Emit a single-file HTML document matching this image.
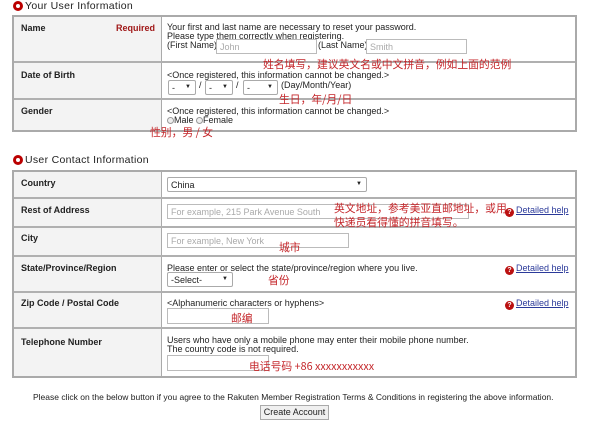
<!DOCTYPE html>
<html><head><meta charset="utf-8"><style>
*{margin:0;padding:0;box-sizing:border-box}
body{width:600px;height:424px;background:#fff;font-family:"Liberation Sans","Noto Sans CJK SC",sans-serif;font-size:9px;color:#222;position:relative;overflow:hidden}
.a{position:absolute;white-space:nowrap}
.h{font-size:10.5px;color:#222;letter-spacing:.3px}
.dot{position:absolute;width:10px;height:10px;border-radius:50%;background:#b00;}
.dot:after{content:"";position:absolute;left:3px;top:3px;width:4px;height:4px;border-radius:50%;background:#fff}
.tbl{position:absolute;left:12px;width:565px;border:2px solid #aaa;background:#fff}
.lab{position:absolute;left:0;width:148px;background:#f3f3f3;border-right:1px solid #aaa}
.ln{position:absolute;left:0;right:0;height:2px;background:#b0b0b0}
.b{font-weight:bold;font-size:9px;color:#222}
.in{position:absolute;border:1px solid #bbb;background:#fff;color:#aaa;font-size:9px;padding:2px 3px;height:15px}
.sel{position:absolute;border:1px solid #aaa;background:#fff;font-size:9px;padding:2px 3px;height:15px;border-radius:2px}
.sel:after{content:"▼";position:absolute;right:4px;top:3px;font-size:6px}
.r{color:#c4262a;font-size:10.8px;font-family:"Noto Sans CJK SC",sans-serif}
.help{color:#2b3a9a;text-decoration:underline;font-size:9px}
.q{display:inline-block;width:9px;height:9px;border-radius:50%;background:#b11;color:#fff;font-size:7px;text-align:center;line-height:9px;font-weight:bold;vertical-align:-1px;margin-right:2px}
.rad{display:inline-block;width:7px;height:7px;border-radius:50%;border:1px solid #999;background:#eee;vertical-align:-1px}
</style></head><body>

<div class="dot" style="left:13px;top:1px"></div>
<div class="a h" style="left:25px;top:0px">Your User Information</div>

<div class="tbl" style="top:15px;height:117px">
  <div class="lab" style="top:0;height:113px"></div>
  <div class="ln" style="top:44px"></div>
  <div class="ln" style="top:81px"></div>
</div>
<div class="a b" style="left:21px;top:23px">Name</div>
<div class="a b" style="left:116px;top:23px;color:#a01818">Required</div>
<div class="a" style="left:167px;top:23px;line-height:9px">Your first and last name are necessary to reset your password.<br>Please type them correctly when registering.<br>(First Name)</div>
<div class="in" style="left:216px;top:39px;width:101px">John</div>
<div class="a" style="left:318px;top:40px">(Last Name)</div>
<div class="in" style="left:366px;top:39px;width:101px">Smith</div>
<div class="a r" style="left:263px;top:56px">姓名填写，建议英文名或中文拼音，例如上面的范例</div>

<div class="a b" style="left:21px;top:70px">Date of Birth</div>
<div class="a" style="left:167px;top:70px">&lt;Once registered, this information cannot be changed.&gt;</div>
<div class="sel" style="left:168px;top:80px;width:28px">-</div>
<div class="a" style="left:199px;top:80px">/</div>
<div class="sel" style="left:205px;top:80px;width:28px">-</div>
<div class="a" style="left:236px;top:80px">/</div>
<div class="sel" style="left:243px;top:80px;width:35px">-</div>
<div class="a" style="left:281px;top:80px">(Day/Month/Year)</div>
<div class="a r" style="left:279px;top:91px">生日，年/月/日</div>

<div class="a b" style="left:21px;top:106px">Gender</div>
<div class="a" style="left:167px;top:106px">&lt;Once registered, this information cannot be changed.&gt;</div>
<div class="a" style="left:167px;top:115px"><span class="rad"></span>Male <span class="rad"></span>Female</div>
<div class="a r" style="left:150px;top:124px">性别，男 / 女</div>

<div class="dot" style="left:13px;top:155px"></div>
<div class="a h" style="left:25px;top:154px">User Contact Information</div>

<div class="tbl" style="top:170px;height:208px">
  <div class="lab" style="top:0;height:204px"></div>
  <div class="ln" style="top:25px"></div>
  <div class="ln" style="top:54px"></div>
  <div class="ln" style="top:83px"></div>
  <div class="ln" style="top:119px"></div>
  <div class="ln" style="top:155px"></div>
</div>
<div class="a b" style="left:21px;top:178px">Country</div>
<div class="sel" style="left:167px;top:177px;width:200px;color:#222">China</div>

<div class="a b" style="left:21px;top:205px">Rest of Address</div>
<div class="in" style="left:167px;top:204px;width:302px">For example, 215 Park Avenue South</div>
<div class="a r" style="left:334px;top:201px;line-height:14px">英文地址，参考美亚直邮地址，或用<br>快递员看得懂的拼音填写。</div>
<div class="a" style="left:505px;top:205px"><span class="q">?</span><span class="help">Detailed help</span></div>

<div class="a b" style="left:21px;top:233px">City</div>
<div class="in" style="left:167px;top:233px;width:182px">For example, New York</div>
<div class="a r" style="left:279px;top:239px">城市</div>

<div class="a b" style="left:21px;top:263px">State/Province/Region</div>
<div class="a" style="left:167px;top:263px">Please enter or select the state/province/region where you live.</div>
<div class="a" style="left:505px;top:263px"><span class="q">?</span><span class="help">Detailed help</span></div>
<div class="sel" style="left:167px;top:272px;width:66px;color:#222">-Select-</div>
<div class="a r" style="left:268px;top:272px">省份</div>

<div class="a b" style="left:21px;top:298px">Zip Code / Postal Code</div>
<div class="a" style="left:167px;top:298px">&lt;Alphanumeric characters or hyphens&gt;</div>
<div class="a" style="left:505px;top:298px"><span class="q">?</span><span class="help">Detailed help</span></div>
<div class="in" style="left:167px;top:308px;width:102px;height:16px"></div>
<div class="a r" style="left:231px;top:310px">邮编</div>

<div class="a b" style="left:21px;top:337px">Telephone Number</div>
<div class="a" style="left:167px;top:336px;line-height:9px">Users who have only a mobile phone may enter their mobile phone number.<br>The country code is not required.</div>
<div class="in" style="left:167px;top:355px;width:102px;height:16px"></div>
<div class="a r" style="left:249px;top:358px">电话号码 +86 xxxxxxxxxxx</div>

<div class="a" style="left:33px;top:392px;font-size:8.5px">Please click on the below button if you agree to the Rakuten Member Registration Terms &amp; Conditions in registering the above information.</div>
<div class="a" style="left:260px;top:405px;width:69px;height:15px;border:1px solid #aaa;background:#f0f0f0;font-size:9px;text-align:center;line-height:13px">Create Account</div>
</body></html>
